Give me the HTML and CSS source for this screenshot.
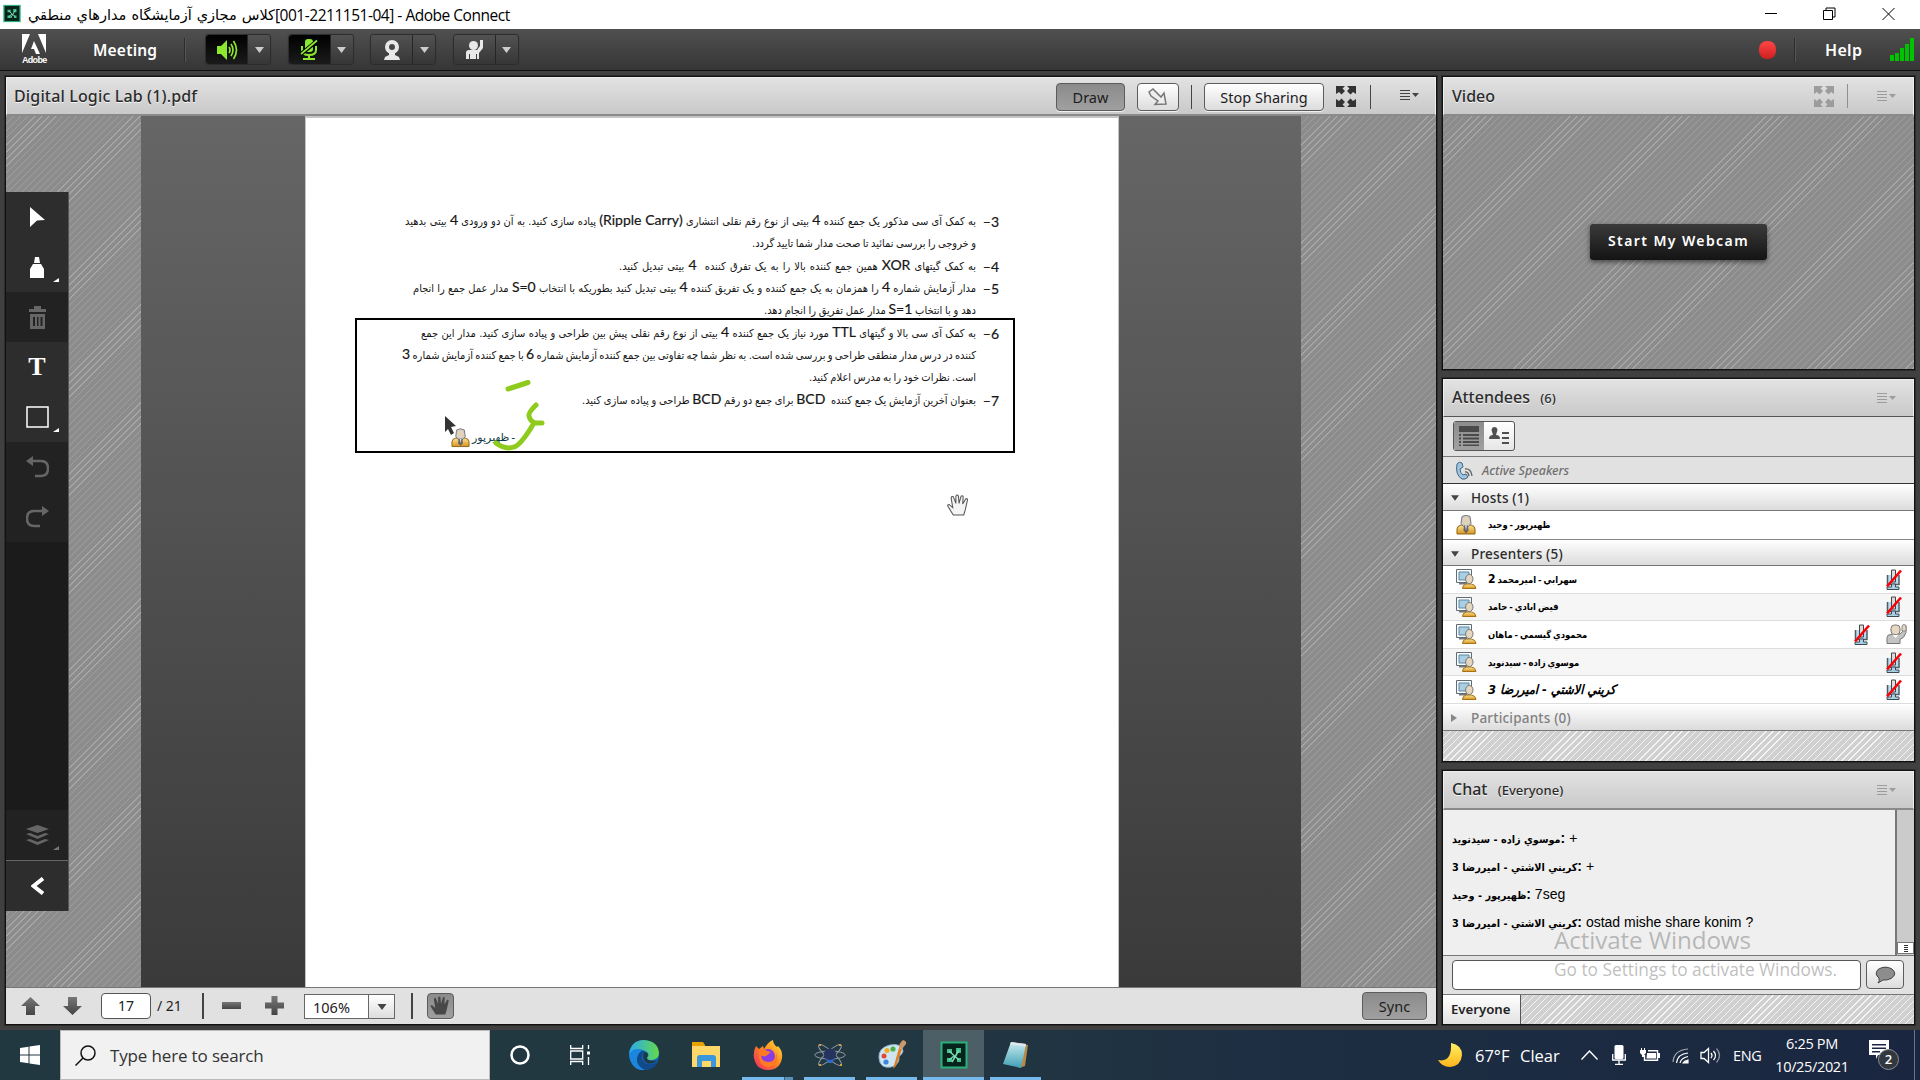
FILE: index.html
```html
<!DOCTYPE html>
<html lang="en">
<head>
<meta charset="utf-8">
<title>Adobe Connect</title>
<link rel="stylesheet" href="styles.css">
</head>
<body>
<svg class="defs" aria-hidden="true">
  <defs>
    <linearGradient id="gGold" x1="0" y1="0" x2="0" y2="1"><stop offset="0" stop-color="#fbe39a"/><stop offset="1" stop-color="#d8951b"/></linearGradient>
    <linearGradient id="gGrey" x1="0" y1="0" x2="0" y2="1"><stop offset="0" stop-color="#777"/><stop offset="1" stop-color="#444"/></linearGradient>
    <linearGradient id="gEdge" x1="0" y1="0" x2="1" y2="0"><stop offset="0" stop-color="#2ba9ef"/><stop offset="1" stop-color="#63d94a"/></linearGradient>
    <linearGradient id="gFox" x1="1" y1="0" x2="0" y2="1"><stop offset="0" stop-color="#ffe540"/><stop offset=".45" stop-color="#ff8a1e"/><stop offset="1" stop-color="#f4216b"/></linearGradient>
    <linearGradient id="gMoon" x1="0" y1="0" x2="0" y2="1"><stop offset="0" stop-color="#ffef60"/><stop offset="1" stop-color="#ffb51c"/></linearGradient>
    <linearGradient id="gNote" x1="0" y1="0" x2="0" y2="1"><stop offset="0" stop-color="#c9edf2"/><stop offset="1" stop-color="#3f9fb4"/></linearGradient>
    <symbol id="drop" viewBox="0 0 9 6"><path d="M0 0h9L4.5 6z"/></symbol>
    <symbol id="menu" viewBox="0 0 19 11"><path d="M0 0h10v1H0zM0 3h10v1H0zM0 6h10v1H0zM0 9h10v1H0zM12 3h7L15.500 7z"/></symbol>
    <symbol id="full" viewBox="0 0 20 21"><path d="M0 0h9L6.500 2.500 9 5 5.500 8.500 3 6 0 8zM20 0h-9l2.500 2.500L11 5l3.500 3.500L17 6l3 2zM0 21h9l-2.500-2.500L9 16l-3.500-3.500L3 15l-3-2zM20 21h-9l2.500-2.500L11 16l3.500-3.500L17 15l3-2z"/></symbol>
    <symbol id="host" viewBox="0 0 20 20"><path d="M1 19v-5q0-3 4-4h10q4 1 4 4v5z" fill="url(#gGold)" stroke="#8f6413"/><path d="M6 1.500Q10-1 14 1.500l1 7-2.500 3h-5L5 8.500z" fill="#cfcfcf" stroke="#777"/><ellipse cx="10" cy="6" rx="3.300" ry="4" fill="#e3d2b4"/><path d="M8 10.500h4l.5 5-2.500 3-2.500-3z" fill="#666"/><path d="M9 10.500h2l-1 5z" fill="#ddd"/></symbol>
    <symbol id="presenter" viewBox="0 0 21 20"><path d="M.5.500h15v13H.5z" fill="#fafafa" stroke="#5f6d77"/><path d="M3 3h10v8H3z" fill="#a9cfe4" stroke="#5d88a5"/><path d="M3 15.500h8V14H3z" fill="#777"/><path d="M6.500 19.500q0-4 4-4.500h5q4 .5 4.500 4.500z" fill="url(#gGold)" stroke="#a5721a"/><ellipse cx="13.300" cy="10" rx="3.700" ry="4.600" fill="#e3d7c2" stroke="#7d766c"/></symbol>
    <symbol id="muted" viewBox="0 0 16 21"><path d="M1.500 6v9.500h11.500V6" fill="#b9dbef" stroke="#4d5d68" stroke-width="1.500"/><path d="M5.500 1h4v12h-4z" fill="#ddd" stroke="#444"/><path d="M5.500 15h4v3h3.500v2.500H1V18h4.500z" fill="#a9cfe4" stroke="#3c4a54"/><path d="M1 17.500L15 1.500" stroke="#fb0007" stroke-width="2.600" fill="none"/></symbol>
    <symbol id="raised" viewBox="0 0 21 20"><path d="M1 19.500v-6q0-3 4-3h8q2-1 3.500-3l1-6h2.500v7q-2 6-6 7v4z" fill="#c4c4c4" stroke="#777"/><path d="M6 10h7l-3.500 4z" fill="#fff"/><rect x="5" y="1" width="9" height="9.500" rx="3.500" fill="#e6d9c0" stroke="#777"/><path d="M16 3q0-2.500 2-2.500T20 3v4h-4z" fill="#e6d9c0" stroke="#888"/></symbol>
    <symbol id="pal" viewBox="0 0 28 28"><path d="M1.500 1.500h25v25h-25z" fill="#08221c" stroke="#2bb27c" stroke-width="2"/><path d="M7 8h5v4H7zM16 7h5v5h-5zM7 17h5v4H7zM17 17h4v4h-4z" fill="#3fbf8d"/><path d="M9 10l10 9M19 9l-7 12M14 15l-5 4" stroke="#7edbb5" stroke-width="1.500"/></symbol>
    <symbol id="hand" viewBox="0 0 22 21"><path d="M6 20L1 12q-1-2 1-2l3.500 3L4 4q0-2 2-1.500L8.500 9 8.500 2q1-2 2.500 0l.5 7L13.500 2q1.500-1 2 .500L15 9.500l3-5q2-.5 1.500 1.500L17.500 15 16 20z"/></symbol>
  </defs>
</svg>

<div class="screen">
  <header class="titlebar">
    <svg class="app-icon" viewBox="0 0 28 28"><use href="#pal"/></svg>
    <div class="window-title"><bdi class="fa" dir="rtl">كلاس مجازي آزمايشگاه مدارهاي منطقي</bdi><span class="code">[001-2211151-04] - Adobe Connect</span></div>
    <svg class="window-buttons" viewBox="0 0 130 14" fill="none" stroke="#000"><path d="M0 6.500h12M58.500 3.500h9v9h-9zM61 3V1h9v9h-2M117.500 1l12 12M129.500 1l-12 12"/></svg>
  </header>

  <nav class="appbar">
    <div class="adobe"><svg viewBox="0 0 24 20" width="24" height="20"><path fill="#fff" d="M0 0h8L0 19zM16 0h8v19zM12 7l6 13h-4l-2-5H9z"/></svg><span>Adobe</span></div>
    <span class="menu-meeting">Meeting</span>
    <i class="bar-sep"></i>
    <div class="media">
      <div class="split on"><span><svg width="22" height="20" viewBox="0 0 22 20"><path d="M1 6h4l6-6v20l-6-6H1z" fill="#8be82e"/><path d="M13 7q2 3 0 6M15 4q4 6 0 12M17.500 1q6 9 0 18" fill="none" stroke="#8be82e" stroke-width="1.700"/></svg></span><b><svg width="9" height="6"><use href="#drop"/></svg></b></div>
      <div class="split on"><span><svg width="18" height="21" viewBox="0 0 18 21"><rect x="5" y="0" width="8" height="13" rx="3" fill="#8be82e"/><path d="M2 7v4q0 5 7 5t7-5V7M9 16v3M3 20h12" fill="none" stroke="#8be82e" stroke-width="2"/><path d="M1 15L17 2" stroke="#000" stroke-width="4"/><path d="M1 15L17 1.500" stroke="#8be82e" stroke-width="1.700"/></svg></span><b><svg width="9" height="6"><use href="#drop"/></svg></b></div>
      <div class="split"><span><svg width="18" height="20" viewBox="0 0 18 20"><circle cx="9" cy="7" r="5" fill="none" stroke="#e8e8e8" stroke-width="4"/><path d="M6 13h6v2l4 2 1 3H1l1-3 4-2z" fill="#e8e8e8"/></svg></span><b><svg width="9" height="6"><use href="#drop"/></svg></b></div>
      <div class="split"><span><svg width="19" height="21" viewBox="0 0 19 21"><circle cx="8.500" cy="6.500" r="4.500" fill="#e8e8e8"/><path d="M1 20v-6q0-3 3-3h8l3-4V1h3v8l-4 5v6h-2v-5h-1v5H5v-5H4v5z" fill="#e8e8e8"/></svg></span><b><svg width="9" height="6"><use href="#drop"/></svg></b></div>
    </div>
    <div class="appbar-right">
      <i class="record"></i><i class="bar-sep"></i><span class="menu-help">Help</span>
      <svg class="signal" width="24" height="23" viewBox="0 0 24 23"><path fill="#00c300" d="M0 17h4v6H0zM5 15h4v8H5zM10 10h4v13h-4zM15 6h4v17h-4zM20 0h4v23h-4z"/></svg>
    </div>
  </nav>

  <main class="workspace">
    <section class="pod share">
      <div class="pod-head">
        <h2>Digital Logic Lab (1).pdf</h2>
        <div class="share-tools">
          <span class="btn pressed draw">Draw</span>
          <span class="btn pointer"><svg width="20" height="18" viewBox="0 0 20 18"><path d="M1 4l4-3 8 8 3-4 2 11-11 .500L10 13 3 8z" fill="#eee" stroke="#777" stroke-width="1.500"/></svg></span>
          <i class="sep"></i>
          <span class="btn stop">Stop Sharing</span>
          <svg class="full" width="20" height="21"><use href="#full"/></svg>
          <i class="sep"></i>
          <svg class="menu-ic" width="19" height="11"><use href="#menu"/></svg>
        </div>
      </div>
      <div class="canvas">
        <div class="side left stripes">
          <div class="draw-tools">
            <span><svg width="15" height="20" viewBox="0 0 15 20"><path d="M0 0l15 13-8 .500L0 20z" fill="#fff"/></svg></span>
            <span class="more"><svg width="14" height="21" viewBox="0 0 14 21"><path d="M5 0h4l1 6H4zM3 7h8l3 5v9H0v-9z" fill="#fff"/></svg></span>
            <span class="off"><svg width="17" height="23" viewBox="0 0 17 23"><path d="M0 3h5V0h7v3h5v3H0zM1 8h15v15H1zM4 11v9h2v-9zM8 11v9h1.500v-9zM11.500 11v9h2v-9z" fill="#666" fill-rule="evenodd"/></svg></span>
            <span class="tee">T</span>
            <span class="more"><svg width="23" height="22" viewBox="0 0 23 22"><path d="M1 1h21v20H1z" fill="none" stroke="#fff" stroke-width="1.500"/></svg></span>
            <span class="off"><svg width="23" height="22" viewBox="0 0 23 22"><path d="M4 5h11q7 0 7 7.500T15 20H9" fill="none" stroke="#666" stroke-width="2.500"/><path d="M0 5l7-5v10z" fill="#666"/></svg></span>
            <span class="off"><svg width="23" height="22" viewBox="0 0 23 22"><path d="M19 5H8Q1 5 1 12.500T8 20h6" fill="none" stroke="#666" stroke-width="2.500"/><path d="M23 5l-7-5v10z" fill="#666"/></svg></span>
            <span class="blank"></span>
            <span class="off more dim"><svg width="23" height="20" viewBox="0 0 23 20"><path d="M0 4l11.500-4L23 4 11.500 8zM0 9l4-1 7.500 3L19 8l4 1-11.500 5zM0 15l4-1 7.500 3 7.500-3 4 1-11.500 5z" fill="#666"/></svg></span>
            <span class="collapse"><svg width="13" height="18" viewBox="0 0 13 18"><path d="M12 1.500L2.500 9 12 16.500" fill="none" stroke="#fff" stroke-width="4"/></svg></span>
          </div>
        </div>
        <div class="mat">
          <article class="page" dir="rtl" lang="fa">
            <div class="ln"><b>3–</b><p class="w1">به کمک آی سی مذکور یک جمع کننده <em>4</em> بیتی از نوع رقم نقلی انتشاری <em dir="ltr">(Ripple Carry)</em> پیاده سازی کنید. به آن دو ورودی <em>4</em> بیتی بدهید</p></div>
            <div class="ln"><b></b><p class="w2">و خروجی را بررسی نمائید تا صحت مدار شما تایید گردد.</p></div>
            <div class="ln"><b>4–</b><p class="w3">به کمک گیتهای <em>XOR</em> همین جمع کننده بالا را به یک تفرق کننده &nbsp;<em>4</em> بیتی تبدیل کنید.</p></div>
            <div class="ln"><b>5–</b><p class="w4">مدار آزمایش شماره <em>4</em> را همزمان به یک جمع کننده و یک تفریق کننده <em>4</em> بیتی تبدیل کنید بطوریکه با انتخاب <em>S=0</em> مدار عمل جمع را انجام</p></div>
            <div class="ln"><b></b><p class="w5">دهد و با انتخاب <em>S=1</em> مدار عمل تفریق را انجام دهد.</p></div>
            <div class="ln"><b>6–</b><p class="w6">به کمک آی سی بالا و گیتهای <em>TTL</em> مورد نیاز یک جمع کننده <em>4</em> بیتی از نوع رقم نقلی پیش بین طراحی و پیاده سازی کنید. مدار این جمع</p></div>
            <div class="ln"><b></b><p class="w7">کننده در درس مدار منطقی طراحی و بررسی شده است. به نظر شما چه تفاوتی بین جمع کننده آزمایش شماره <em>6</em> با جمع کننده آزمایش شماره <em>3</em></p></div>
            <div class="ln"><b></b><p class="w8">است. نظرات خود را به مدرس اعلام کنید.</p></div>
            <div class="ln"><b>7–</b><p class="w9">بعنوان آخرین آزمایش یک جمع کننده &nbsp;<em>BCD</em> برای جمع دو رقم <em>BCD</em> طراحی و پیاده سازی کنید.</p></div>
            <div class="mark-box"></div>
            <div class="user-tag" dir="ltr"><svg width="19" height="20"><use href="#host"/></svg><bdi dir="rtl">ظهيرپور</bdi>-</div>
            <svg class="ink" viewBox="0 0 110 80"><path d="M68 9L88 2.500M96 25q-8 8-7 11 1 5 6 7h7M94 43Q81 65 74 67q-9 3-18-4" fill="none" stroke="#8ecb1d" stroke-width="5" stroke-linecap="round" stroke-linejoin="round"/><path d="M5 36l11 10-5 1 3 6-3 2-3-6-3 3z" fill="#333"/></svg>
            <svg class="grab" viewBox="0 0 22 21"><use href="#hand" fill="#f4f4f4" stroke="#555"/></svg>
          </article>
        </div>
        <div class="side right stripes"></div>
      </div>
      <footer class="pager">
        <svg class="up" width="19" height="18" viewBox="0 0 19 18"><path d="M9.500 0L19 9h-5v9H5V9H0z" fill="url(#gGrey)"/></svg>
        <svg class="down" width="19" height="18" viewBox="0 0 19 18"><path d="M9.500 18L19 9h-5V0H5v9H0z" fill="url(#gGrey)"/></svg>
        <span class="field">17</span><span class="total">/ 21</span><i class="sep"></i>
        <svg class="minus" width="19" height="7"><path d="M0 0h19v7H0z" fill="url(#gGrey)"/></svg>
        <svg class="plus" width="19" height="19" viewBox="0 0 19 19"><path d="M6.500 0h6v6.500H19v6h-6.500V19h-6v-6.500H0v-6h6.500z" fill="url(#gGrey)"/></svg>
        <span class="zoom"><span>106%</span><b><svg width="10" height="6"><use href="#drop"/></svg></b></span>
        <i class="sep"></i>
        <span class="btn pressed pan"><svg width="21" height="21"><use href="#hand" fill="#484848"/></svg></span>
        <span class="btn pressed sync">Sync</span>
      </footer>
    </section>

    <aside class="column">
      <section class="pod video">
        <div class="pod-head"><h2>Video</h2><div class="pod-tools"><svg width="20" height="21"><use href="#full"/></svg><i class="sep"></i><svg width="19" height="11"><use href="#menu"/></svg></div></div>
        <div class="video-body stripes"><span class="webcam">Start My Webcam</span></div>
      </section>

      <section class="pod attendees">
        <div class="pod-head"><h2>Attendees <small>(6)</small></h2><div class="pod-tools"><svg width="19" height="11"><use href="#menu"/></svg></div></div>
        <div class="view-bar"><div class="toggle">
          <span class="sel"><svg width="20" height="20" viewBox="0 0 20 20"><path d="M0 0h20v6H0zM0 8h2v2H0zM4 8h16v2H4zM0 11.500h2v2H0zM4 11.500h16v2H4zM0 15h2v2H0zM4 15h16v2H4zM0 18.500h2V20H0zM4 18.500h16V20H4z" fill="#4a4a4a"/></svg></span>
          <span><svg width="20" height="18" viewBox="0 0 20 18"><path d="M0 12q0-4 4-4L2.500 3Q3 0 5.500 0t3 3L7 8q4 0 4 4zM13 5h7v2h-7zM13 10h7v2h-7zM13 15h7v2h-7z" fill="#4f4f4f"/></svg></span>
        </div></div>
        <div class="speakers"><svg width="18" height="19" viewBox="0 0 18 19"><path d="M2 3q2-3 5-1l1 4-3 2q0 4 3 6l3-1 2 3q-3 3-6 2Q0 14 2 3z" fill="#9cc6e3" stroke="#47637c"/><path d="M10 11q3-1 4 4M10 8q6-1 7 7" fill="none" stroke="#666" stroke-width="1.400"/></svg>Active Speakers</div>
        <div class="group hosts-h"><svg width="8" height="6"><use href="#drop"/></svg>Hosts (1)</div>
        <div class="person host"><svg width="20" height="20"><use href="#host"/></svg><bdi dir="rtl">ظهيرپور - وحيد</bdi></div>
        <div class="group pres-h"><svg width="8" height="6"><use href="#drop"/></svg>Presenters (5)</div>
        <div class="person"><svg width="21" height="20"><use href="#presenter"/></svg><bdi dir="rtl">سهرابي - اميرمحمد <b>2</b></bdi><svg class="mic" width="16" height="21"><use href="#muted"/></svg></div>
        <div class="person alt"><svg width="21" height="20"><use href="#presenter"/></svg><bdi dir="rtl">فيض ابادي - حامد</bdi><svg class="mic" width="16" height="21"><use href="#muted"/></svg></div>
        <div class="person"><svg width="21" height="20"><use href="#presenter"/></svg><bdi dir="rtl">محمودي گيسمي - ماهان</bdi><svg class="mic raised" width="16" height="21"><use href="#muted"/></svg><svg class="arm" width="21" height="20"><use href="#raised"/></svg></div>
        <div class="person alt"><svg width="21" height="20"><use href="#presenter"/></svg><bdi dir="rtl">موسوي زاده - سيدنويد</bdi><svg class="mic" width="16" height="21"><use href="#muted"/></svg></div>
        <div class="person me"><svg width="21" height="20"><use href="#presenter"/></svg><bdi dir="rtl">كريني الاشتي - اميررضا 3</bdi><svg class="mic" width="16" height="21"><use href="#muted"/></svg></div>
        <div class="group empty"><svg width="6" height="8" viewBox="0 0 6 8"><path d="M0 0l6 4-6 4z"/></svg>Participants (0)</div>
        <div class="filler light-stripes"></div>
      </section>

      <section class="pod chat">
        <div class="pod-head"><h2>Chat <small>(Everyone)</small></h2><div class="pod-tools"><svg width="19" height="11"><use href="#menu"/></svg></div></div>
        <div class="log">
          <div class="messages">
            <p><bdi dir="rtl">موسوي زاده - سيدنويد</bdi><b>:</b> +</p>
            <p><bdi dir="rtl">كريني الاشتي - اميررضا 3</bdi><b>:</b> +</p>
            <p><bdi dir="rtl">ظهيرپور - وحيد</bdi><b>:</b> 7seg</p>
            <p><bdi dir="rtl">كريني الاشتي - اميررضا 3</bdi><b>:</b> ostad mishe share konim ?</p>
          </div>
          <div class="scroll"><i><svg width="4" height="7"><path d="M0 0h4v1H0zM0 2h4v1H0zM0 4h4v1H0zM0 6h4v1H0z" fill="#333"/></svg></i></div>
        </div>
        <div class="compose"><span class="chat-input"></span><span class="btn send"><svg width="21" height="18" viewBox="0 0 21 18"><path d="M4 12Q-1 8 3 3.500 10-1 17 3q6 5-1 9.500-4 2-8 1.500L3 17q2-2 1-5z" fill="#8d8d8d" stroke="#444"/></svg></span></div>
        <div class="tabs light-stripes"><span>Everyone</span></div>
      </section>
      <div class="watermark"><div>Activate Windows</div><p>Go to Settings to activate Windows.</p></div>
    </aside>
  </main>

  <footer class="taskbar">
    <span class="start"><svg width="20" height="20" viewBox="0 0 20 20"><path fill="#fff" d="M0 3l8.500-1.300v7.800H0zM9.500 1.500L20 0v9.500H9.500zM0 10.500h8.500v7.800L0 17zM9.500 10.500H20V20L9.500 18.500z"/></svg></span>
    <span class="search"><svg width="21" height="21" viewBox="0 0 21 21"><circle cx="13" cy="8" r="7" fill="none" stroke="#111" stroke-width="1.500"/><path d="M8 13l-7.500 7.500" stroke="#111" stroke-width="1.500"/></svg>Type here to search</span>
    <span class="task cortana"><svg width="20" height="20" viewBox="0 0 20 20"><circle cx="10" cy="10" r="8.500" fill="none" stroke="#fff" stroke-width="2.500"/></svg></span>
    <span class="task views"><svg width="20" height="20" viewBox="0 0 20 20" fill="none" stroke="#fff" stroke-width="1.300"><path d="M.7 0v3.500h12V0M.7 20v-3.500h12V20M.7 6h12v8h-12zM18.500 0v4M18.500 12v8"/><path d="M17 6.500h3v3h-3z" fill="#fff" stroke="none"/></svg></span>
    <span class="task"><svg width="30" height="30" viewBox="0 0 30 30"><circle cx="15" cy="15" r="15" fill="#0f62b4"/><path d="M0 14Q2 0 15 0q14 1 15 13 0 6-7 7-5 0-5-2 3-3 0-6-8-6-18 2z" fill="url(#gEdge)"/><path d="M0 14q5-7 13-4-6 5-3 12 2 5 8 8Q2 32 0 14z" fill="#1b86dc"/><path d="M15 11q-5 7 1 12 5 3 12-1l1 1q-5 7-13 7-9-4-8-12 1-6 7-7z" fill="#114a8b"/><path d="M15 12q4 1 4 3-2 3 0 5 4 2 9 0-4 5-10 3-6-4-3-11z" fill="#213841"/></svg></span>
    <span class="task"><svg width="28" height="26" viewBox="0 0 28 26"><path d="M0 0h11l2 3v4H0z" fill="#e8a200"/><path d="M0 4h28v21H0z" fill="#ffd668"/><path d="M5 25V16q0-3 3-3h13q3 0 3 3v9h-5v-6h-9v6z" fill="#3a96dd"/></svg></span>
    <span class="task run two"><svg width="30" height="30" viewBox="0 0 30 30"><path d="M3 6l3 3 4-3 1 3q4-7 9-9 0 4 4 7l1-1q5 5 4 12-2 12-14 12T1 18Q0 11 3 6z" fill="url(#gFox)"/><circle cx="15" cy="16" r="7" fill="#8a3ce0"/><path d="M6 10q5-2 8 1l4 1-5 4q-4 1-5-1 0 7 8 7 8-1 7-10 5 14-8 15Q5 27 6 10z" fill="#ff7b22"/></svg></span>
    <span class="task run"><svg width="32" height="26" viewBox="0 0 32 26" fill="none"><g stroke="#8f98a5" stroke-width="1"><ellipse cx="16" cy="13" rx="15.300" ry="4"/><ellipse cx="16" cy="13" rx="15" ry="3.800" transform="rotate(42 16 13)"/><ellipse cx="16" cy="13" rx="15" ry="3.800" transform="rotate(-42 16 13)"/></g><circle cx="16" cy="12.500" r="6" fill="#24345f"/><path d="M11 16q5 4 10 0l-3 5h-4z" fill="#3268c7"/><path d="M5 2h2v2H5zM25 2h2v2h-2zM5 22h2v2H5zM26 22h2v2h-2z" fill="#dd9b3c"/></svg></span>
    <span class="task run"><svg width="30" height="30" viewBox="0 0 30 30"><path d="M2 18Q1 8 13 5q12-2 13 6-1 4-4 5 1 9-8 11Q3 29 2 18z" fill="#cfe5f1" stroke="#8fb3c8"/><circle cx="7" cy="16" r="2.500" fill="#e2473b"/><circle cx="10" cy="10.500" r="2.500" fill="#f6a821"/><circle cx="16" cy="9" r="2.600" fill="#4ab04a"/><circle cx="9" cy="22" r="2.600" fill="#3e87dd"/><path d="M16 29l6-21 3 1-6 17z" fill="#e07d21"/><path d="M22 8q0-5 4-8 4 1 3 4l-4 5z" fill="#c9996c"/></svg></span>
    <span class="task run active"><svg width="28" height="28"><use href="#pal"/></svg></span>
    <span class="task run"><svg width="28" height="28" viewBox="0 0 28 28"><path d="M10 2l16 2-3 21-6 2z" fill="#b88a45"/><path d="M9 1l15 2-5 24L1 23z" fill="url(#gNote)"/><path d="M9 1l15 2-.5 2.500L8 3.500z" fill="#dfe7ea"/></svg></span>
    <div class="tray">
      <svg class="moon" width="24" height="24" viewBox="0 0 24 24"><path d="M13 0q11 2 11 12-1 11-12 12Q4 24 0 17q14 3 13-17z" fill="url(#gMoon)"/></svg>
      <span class="temp">67°F</span><span class="sky">Clear</span>
      <svg class="chev" width="17" height="10" viewBox="0 0 17 10" fill="none" stroke="#fff" stroke-width="1.400"><path d="M.5 9.500l8-8.500 8 8.500"/></svg>
      <svg class="tmic" width="14" height="20" viewBox="0 0 14 20"><rect x="2.500" y="0" width="9" height="14" rx="1.500" fill="#fff"/><path d="M.7 9v6h12.600V9M7 15v4M3 19.300h8" fill="none" stroke="#fff" stroke-width="1.300"/></svg>
      <svg class="batt" width="20" height="14" viewBox="0 0 20 14"><path d="M4.500 7v5.300h13V2.700H8" fill="none" stroke="#fff" stroke-width="1.400"/><path d="M7 5h9v5.500H6.500zM18 5h2v5h-2zM0 2h1V0h1v2h2V0h1v2h1v3L4 7v2H2V7L0 5z" fill="#fff"/></svg>
      <svg class="wifi" width="17" height="17" viewBox="0 0 17 17" fill="none" stroke="#fff" stroke-width="1.200"><path d="M1 15Q2 3 16 2" opacity=".6"/><path d="M4.500 16q1-9 11.500-10M8 16q1-5 8-6.500"/><path d="M11 16q1-2 5-3v3z" fill="#fff"/></svg>
      <svg class="vol" width="21" height="17" viewBox="0 0 21 17" fill="none" stroke="#fff" stroke-width="1.300"><path d="M1 5.500h3l4.500-4v14l-4.500-4H1zM11 6q2 2.500 0 5M13.500 4q4 4.500 0 9"/><path d="M16.500 1.500q6 7 0 14" opacity=".5"/></svg>
      <span class="lang">ENG</span>
      <span class="clock"><span>6:25 PM</span><span class="date">10/25/2021</span></span>
      <span class="notif"><svg width="20" height="20" viewBox="0 0 20 20"><path d="M0 0h20v15H9l-2 4v-4H0zM3 4v1.500h14V4zM3 7.500V9h14V7.500zM3 11v1.500h8V11z" fill="#fff" fill-rule="evenodd"/></svg><b>2</b></span>
    </div>
  </footer>
</div>
</body>
</html>
```
FILE: styles.css
```css
* { box-sizing: border-box; }
body { margin: 0; font-family: "Noto Sans", "DejaVu Sans", sans-serif; overflow: hidden; }
svg { display: block; flex: none; }
bdi, p, span, h2 { white-space: nowrap; }
p, h2 { margin: 0; }
i { font-style: normal; }
.defs { position: absolute; width: 0; height: 0; }
.screen { width: 1920px; height: 1080px; display: flex; flex-direction: column; background: #404040; }

/* window title */
.titlebar { height: 29px; background: #fff; display: flex; align-items: center; padding: 0 25px 0 3px; }
.app-icon { width: 18px; height: 19px; margin: 0 7px 2px 0; }
.window-title { display: flex; align-items: center; font: 15.500px/20px "Open Sans", "DejaVu Sans", sans-serif; color: #000; flex: 1; }
.window-title .fa { font: 14.500px/20px "DejaVu Sans", sans-serif; width: 247px; text-align-last: justify; }
.window-title .code { letter-spacing: -.48px; }
.window-buttons { width: 130px; height: 14px; margin-top: -1px; }

/* application bar */
.appbar { height: 41px; background: linear-gradient(#505050, #363636); display: flex; align-items: center; padding-left: 22px; color: #fff; font-weight: 600; border-bottom: 1px solid #111; box-sizing: content-box; }
.adobe { width: 24px; padding-top: 1px; }
.adobe span { display: block; font: bold 9px/11px "Liberation Sans", sans-serif; letter-spacing: -.7px; margin-top: 1px; }
.menu-meeting { width: 92px; padding-left: 47px; font-size: 15.500px; letter-spacing: .2px; }
.bar-sep { width: 2px; height: 24px; background: #2c2c2c; border-right: 1px solid #555; margin-left: 46px; }
.media { display: flex; gap: 18.500px; margin-left: 20px; }
.split { display: flex; width: 64px; height: 29px; border-radius: 3px; box-shadow: 0 0 1px 1px #2c2c2c; background: linear-gradient(#525252, #363636); }
.split span { width: 42px; display: grid; place-items: center; border-right: 1px solid #262626; border-radius: 3px 0 0 3px; }
.split.on span { background: linear-gradient(#000, #1b1b1b); }
.split b { flex: 1; display: grid; place-items: center; fill: #ccc; }
.appbar-right { margin-left: auto; display: flex; align-items: center; padding-right: 6px; }
.record { width: 17px; height: 18px; border-radius: 8px; background: linear-gradient(#ff4646, #ce1f1f); }
.appbar-right .bar-sep { margin-left: 18px; }
.menu-help { padding-left: 29px; box-sizing: content-box; width: 36px; font-size: 16px; letter-spacing: .3px; }
.signal { margin-left: 29px; }

/* pods */
.workspace { flex: none; height: 959px; display: flex; gap: 7px; padding: 6px 6px 6px 6px; }
.pod { background: #e1e1e1; box-shadow: 0 0 0 1px #111, 0 0 0 2px #2c2c2c; display: flex; flex-direction: column; overflow: hidden; }
.share { width: 1430px; height: 947px; }
.column { width: 471px; display: flex; flex-direction: column; position: relative; }
.pod-head { flex: none; height: 39px; background: linear-gradient(#e2e2e2, #c9c9c9); border: 1px solid #eee; border-bottom: 2px solid #8a8a8a; display: flex; align-items: center; justify-content: space-between; padding-left: 8px; }
.pod-head h2 { font-size: 16px; font-weight: 500; color: #2b2b2b; text-shadow: 0 1px #f5f5f5; line-height: 22px; margin-top: -1px; }
.share .pod-head { padding-left: 7px; }
.share .pod-head h2 { letter-spacing: .15px; }
.pod-head small { font-size: 13px; margin-left: 6px; }
.stripes { background:
  repeating-linear-gradient(135deg, rgba(255,255,255,.17) 0 1px, transparent 1px 4.950px),
  repeating-linear-gradient(135deg, transparent 0 19.800px, rgba(255,255,255,.14) 19.800px 21.600px, transparent 21.600px 24.750px, rgba(255,255,255,.14) 24.750px 26.550px, transparent 26.550px 29.700px, rgba(255,255,255,.14) 29.700px 31.500px, transparent 31.500px 34.650px, rgba(255,255,255,.14) 34.650px 36.450px, transparent 36.450px 69.300px), #8c8c8c; }
.light-stripes { background:
  repeating-linear-gradient(135deg, rgba(255,255,255,.75) 0 1px, transparent 1px 4.950px),
  repeating-linear-gradient(135deg, transparent 0 19.800px, #eee 19.800px 21.600px, transparent 21.600px 24.750px, #eee 24.750px 26.550px, transparent 26.550px 29.700px, #eee 29.700px 31.500px, transparent 31.500px 34.650px, #eee 34.650px 36.450px, transparent 36.450px 69.300px), #d0d0d0; }
.btn { display: grid; place-items: center; border: 1px solid #5c5c5c; border-radius: 4px; background: linear-gradient(#fff, #eee 50%, #dcdcdc); box-shadow: 0 1px #f0f0f0; color: #1c1c1c; }
.btn.pressed { background: linear-gradient(#8b8b8b, #a0a0a0); }
.sep { width: 1px; height: 24px; background: #444; }
.share-tools { display: flex; align-items: center; font-size: 14.500px; padding-top: 1px; }
.draw { width: 69px; height: 28px; }
.pointer { width: 42px; height: 28px; margin: 0 12px; }
.stop { width: 120px; height: 28px; margin: 0 12px; }
.full { fill: #333; margin-right: 14px; }
.menu-ic { fill: #444; margin: 0 16px 2px 29px; }
.pod-tools { display: flex; align-items: center; fill: #9c9c9c; }
.pod-tools .sep { background: #8f8f8f; margin: 0 29px 0 13px; }
.pod-tools svg:last-child { margin-right: 17px; }

/* document share */
.canvas { flex: 1; display: flex; background: linear-gradient(#666, #3a3a3a); }
.side.left { width: 135px; padding-top: 76px; }
.side.right { width: 135px; }
.mat { flex: 1; padding-left: 164px; }
.draw-tools { width: 63px; height: 719px; display: flex; flex-direction: column; background: #2d2d2d; border-right: 1px solid #555; }
.draw-tools span { height: 50px; display: grid; place-items: center; position: relative; }
.draw-tools .off { background: #222; }
.draw-tools .blank { flex: 1; background: #1b1b1b; }
.draw-tools .tee { font: bold 26px/50px "Liberation Serif", serif; color: #fff; }
.draw-tools .collapse { border-top: 1px solid #666; height: 51px; }
.draw-tools .more::after { content: ""; position: absolute; right: 9px; bottom: 10px; border: 3px solid; border-color: transparent #fff #fff transparent; border-width: 2px 3px; }
.draw-tools .dim::after { border-color: transparent #777 #777 transparent; }
.page { width: 814px; height: 871px; background: #fff; padding: 93px 119px 0 0; position: relative; color: #161616; border: solid #c4c4c4; border-width: 2px 1px 0; }
.ln { height: 22.300px; display: flex; align-items: center; font: 11px/22px "DejaVu Sans Condensed", "DejaVu Sans", sans-serif; font-stretch: condensed; }
.ln b, .ln em { font: normal 14px/14px Lato, sans-serif; -webkit-text-stroke: .2px; }
.ln b { width: 23px; }
.ln p { text-align-last: justify; word-spacing: -1.200px; }
.w1 { width: 571px; } .w2 { width: 224px; } .w3 { width: 357px; } .w4 { width: 563px; } .w5 { width: 212px; }
.w6 { width: 555px; } .w7 { width: 574px; } .w8 { width: 167px; } .w9 { width: 394px; }
.mark-box { position: absolute; left: 49px; top: 200px; width: 660px; height: 135px; border: 2px solid #000; }
.user-tag { position: absolute; left: 145px; top: 310px; display: flex; gap: 2px; align-items: center; font: 11px/20px "DejaVu Sans", sans-serif; color: #0c3a44; }
.ink { position: absolute; left: 134px; top: 262px; width: 110px; height: 80px; }
.grab { position: absolute; left: 641px; top: 376px; width: 23px; height: 22px; }
.pager { height: 38px; background: #e1e1e1; border-top: 1px solid #777; display: flex; align-items: center; padding: 0 9px 1px 15px; font-size: 15px; color: #222; }
.pager .sep { height: 26px; width: 2px; }
.down { margin-left: 23px; }
.field { margin-left: 19px; width: 50px; height: 26px; border: 1px solid #555; border-radius: 4px; background: #fff; text-align: center; line-height: 24px; font-size: 14px; }
.total { width: 51px; padding-left: 6px; font-size: 14px; }
.pager .total + .sep { margin-left: 0; margin-right: 18px; }
.plus { margin-left: 24px; }
.zoom { display: flex; margin: 2px 16px 0 20px; width: 91px; height: 25px; border: 1px solid #666; background: #fff; line-height: 24px; padding-left: 8px; font-size: 14.500px; }
.zoom span { flex: 1; }
.zoom b { width: 26px; border-left: 1px solid #666; display: grid; place-items: center; background: linear-gradient(#fff, #ddd); fill: #444; }
.pan { width: 27px; height: 26px; margin-left: -2px; }
.zoom + .sep { margin-right: 16px; }
.sync { margin-left: auto; width: 65px; height: 28px; font-size: 14.500px; }

/* video */
.video { height: 292px; }
.video-body { flex: 1; padding: 108px 0 0 147px; }
.webcam { display: block; width: 177px; height: 36px; border-radius: 3px; background: linear-gradient(#3a3a3a, #141414); color: #fff; font: 600 14px/34px "Noto Sans", sans-serif; letter-spacing: 1.400px; text-align: center; box-shadow: 0 2px 5px rgba(0,0,0,.5); }

/* attendees */
.attendees { height: 382px; margin-top: 10px; }
.attendees .pod-head { height: 38px; border-bottom-width: 1px; border-bottom-color: #555; }
.view-bar { height: 40px; padding: 4px 10px; border-bottom: 1px solid #777; }
.toggle { display: flex; width: 62px; height: 30px; border: 1px solid #555; border-radius: 3px; overflow: hidden; background: linear-gradient(#fff, #e6e6e6); }
.toggle span { flex: 1; display: grid; place-items: center; }
.toggle .sel { background: linear-gradient(#8d8d8d, #a0a0a0); }
.speakers { height: 27px; display: flex; align-items: center; gap: 9px; padding-left: 12px; font: italic 500 12.500px "Noto Sans", sans-serif; color: #707070; border-bottom: 1px solid #333; }
.group { height: 27px; flex: none; display: flex; align-items: center; gap: 12px; padding: 2px 0 0 8px; background: linear-gradient(#fff, #dcdcdc); border-bottom: 1px solid #777; font-size: 13.500px; font-weight: 500; letter-spacing: .2px; color: #2b2b2b; fill: #444; }
.group.pres-h { height: 26px; }
.person { height: 27.600px; flex: none; display: flex; align-items: center; padding: 0 0 0 13px; background: #fff; border-bottom: 1px solid #ddd; font: bold 9.400px "DejaVu Sans Condensed", "DejaVu Sans", sans-serif; font-stretch: condensed; word-spacing: -1px; color: #000; }
.person b { font-size: 12px; }
.person bdi { margin-left: 11px; }
.person.host { height: 29px; border-color: #888; padding-bottom: 1px; }
.person.host bdi { margin-left: 12px; }
.person.alt { background: #f6f6f6; }
.person.me { font-style: italic; font-size: 12.800px; word-spacing: 0; }
.mic { margin-left: auto; margin-right: 12px; }
.mic.raised { margin-right: 16px; }
.arm { margin-right: 7px; }
.group.empty { color: #808080; fill: #888; gap: 14px; }
.filler { flex: 1; }

/* chat */
.chat { height: 253px; margin-top: 10px; }
.log { height: 147px; display: flex; background: #efefef; border-bottom: 1px solid #777; }
.messages { flex: 1; padding: 14px 0 0 9px; font: 14px/28px "Liberation Sans", sans-serif; color: #000; }
.messages p { height: 28px; }
.messages bdi { font: bold 10.800px/28px "DejaVu Sans Condensed", "DejaVu Sans", sans-serif; font-stretch: condensed; }
.scroll { width: 19px; background: #cbcbcb; border-left: 2px solid #777; display: flex; align-items: flex-end; }
.scroll i { width: 17px; height: 12px; margin-bottom: 1px; background: #fff; border: 1px solid #777; display: grid; place-items: center; }
.compose { height: 39px; display: flex; justify-content: space-between; padding: 4px 10px 0 9px; border-bottom: 1px solid #777; }
.chat-input { width: 409px; height: 30px; border: 1px solid #555; border-radius: 4px; background: #fff; }
.send { width: 38px; height: 29px; }
.tabs { flex: 1; }
.tabs span { display: block; width: 78px; height: 29px; background: linear-gradient(#fff, #e2e2e2); border-right: 1px solid #555; font-size: 13.200px; font-weight: 600; line-height: 29px; padding-left: 8px; color: #222; }
.watermark { position: absolute; left: 111px; top: 850px; color: rgba(125,125,125,.5); font: 24.200px/26px "Open Sans", sans-serif; }
.watermark div { letter-spacing: -.1px; white-space: nowrap; }
.watermark p { font-size: 17.300px; line-height: 24px; margin-top: 5px; }

/* taskbar */
.taskbar { flex: none; height: 50px; display: flex; align-items: center; background: linear-gradient(90deg, #213840, #223841 45%, #1d2f42 65%, #1a2640); color: #fff; font-family: "Open Sans", sans-serif; }
.start { width: 60px; display: grid; place-items: center; }
.search { width: 430px; height: 50px; background: #f1f1f1; border: 1px solid #bbb; display: flex; align-items: center; gap: 14px; padding-left: 14px; font-size: 17px; letter-spacing: -.15px; color: #333; }
.task { width: 51px; height: 50px; margin-right: 11px; display: grid; place-items: center; position: relative; }
.task.cortana { margin-left: 5px; width: 50px; margin-right: 10px; }
.task.views { width: 50px; margin-right: 13px; }
.task.run { border-bottom: 3px solid #76b9ed; padding-top: 3px; }
.task.two { border-image: linear-gradient(90deg, #76b9ed 40px, #3b5e76 40px 41px, #5a8fb8 41px) 3; }
.task.active { width: 61px; margin: 0 6px 0 -5px; background: #4d5f66; }
.tray { margin-left: auto; display: flex; align-items: center; font-size: 16.500px; height: 50px; border-right: 1px solid #68748a; margin-right: 5px; padding-right: 15px; }
.temp { width: 45px; margin-left: 13px; }
.sky { width: 49px; }
.chev { margin: 0 14px 0 12px; }
.batt { margin-left: 14px; }
.wifi { margin-left: 12px; }
.vol { margin-left: 11px; }
.lang { font-size: 14.500px; width: 42px; margin-left: 12px; letter-spacing: -.3px; }
.clock { width: 74px; display: flex; flex-direction: column; align-items: center; font-size: 14.500px; line-height: 23px; letter-spacing: -.35px; }
.notif { margin-left: 20px; position: relative; width: 30px; height: 30px; padding-top: 0; }
.notif b { position: absolute; left: 9px; top: 9px; width: 21px; height: 21px; border-radius: 50%; background: #33383f; border: 1px solid #8b8f97; font: 600 13px/19px "Open Sans", sans-serif; text-align: center; }
```
